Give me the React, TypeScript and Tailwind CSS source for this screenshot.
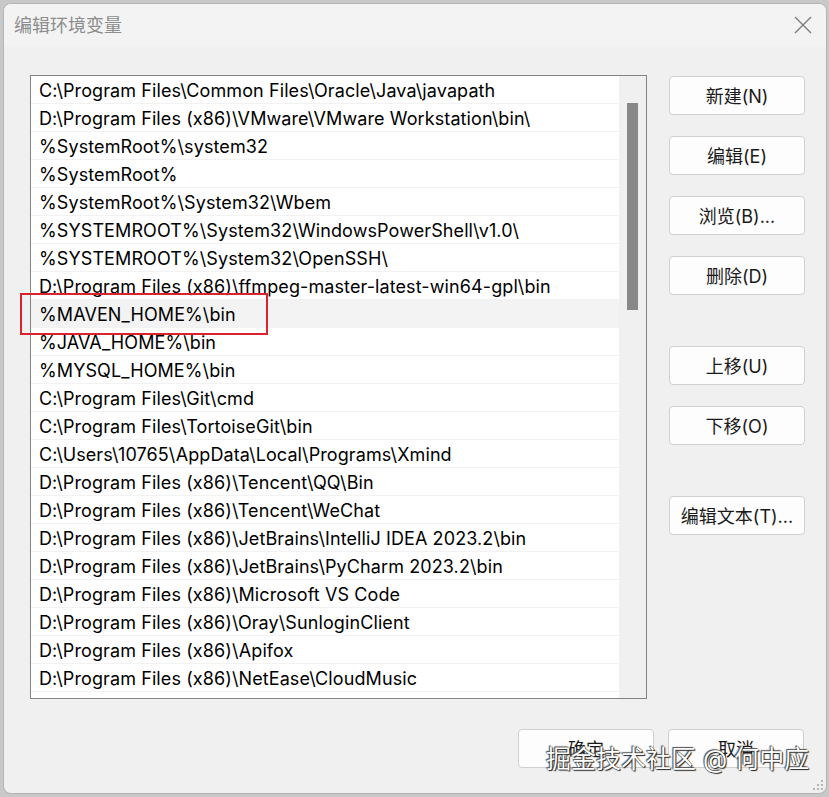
const paths = [
  "C:\\Program Files\\Common Files\\Oracle\\Java\\javapath",
  "D:\\Program Files (x86)\\VMware\\VMware Workstation\\bin\\",
  "%SystemRoot%\\system32",
  "%SystemRoot%",
  "%SystemRoot%\\System32\\Wbem",
  "%SYSTEMROOT%\\System32\\WindowsPowerShell\\v1.0\\",
  "%SYSTEMROOT%\\System32\\OpenSSH\\",
  "D:\\Program Files (x86)\\ffmpeg-master-latest-win64-gpl\\bin",
  "%MAVEN_HOME%\\bin",
  "%JAVA_HOME%\\bin",
  "%MYSQL_HOME%\\bin",
  "C:\\Program Files\\Git\\cmd",
  "C:\\Program Files\\TortoiseGit\\bin",
  "C:\\Users\\10765\\AppData\\Local\\Programs\\Xmind",
  "D:\\Program Files (x86)\\Tencent\\QQ\\Bin",
  "D:\\Program Files (x86)\\Tencent\\WeChat",
  "D:\\Program Files (x86)\\JetBrains\\IntelliJ IDEA 2023.2\\bin",
  "D:\\Program Files (x86)\\JetBrains\\PyCharm 2023.2\\bin",
  "D:\\Program Files (x86)\\Microsoft VS Code",
  "D:\\Program Files (x86)\\Oray\\SunloginClient",
  "D:\\Program Files (x86)\\Apifox",
  "D:\\Program Files (x86)\\NetEase\\CloudMusic",
];

const font = "font-['Inter','Noto_Sans_CJK_SC',sans-serif]";

function Btn({ label, className = "" }: { label: string; className?: string }) {
  return (
    <button
      className={`h-[39px] w-[136px] rounded-[4px] border border-[#d0d0d0] bg-[#fdfdfd] pt-[1px] text-[18px] text-[#1a1a1a] ${className}`}
    >
      {label}
    </button>
  );
}

export default function App() {
  return (
    <div className={`relative h-[797px] w-[829px] overflow-hidden bg-[#c8c8c8] ${font}`}>
      <div className="absolute left-[3px] top-[3px] flex h-[791px] w-[824px] flex-col overflow-hidden rounded-[8px] border border-[#b4b4b4] bg-[#f0f0f0]">
        {/* title bar */}
        <div className="flex h-[42px] shrink-0 items-center justify-between bg-[#f3f3f3] pl-[10px] pr-[14px]">
          <span className="text-[18px] text-[#8c8c8c]">编辑环境变量</span>
          <svg width="18" height="18" viewBox="0 0 18 18" className="text-[#7a7a7a]">
            <path d="M1 1 L17 17 M17 1 L1 17" stroke="currentColor" strokeWidth="1.3" fill="none" />
          </svg>
        </div>

        <div className="flex flex-1 pl-[26px] pt-[29px]">
          {/* list */}
          <div className="relative flex h-[624px] w-[617px] border border-[#838383] bg-white">
            <div className="flex-1 overflow-hidden">
              {paths.map((p, i) => (
                <div
                  key={i}
                  className={`flex h-[28px] items-center border-b border-[#f2f2f2] pl-[8px] pt-[1px] text-[18px] tracking-[0.1px] text-black ${
                    i === 8 ? "bg-[#f3f3f3]" : ""
                  }`}
                >
                  {p}
                </div>
              ))}
            </div>
            <div className="w-[27px] shrink-0 bg-[#f0f0f0] pl-[8px] pt-[27px]">
              <div className="h-[207px] w-[11px] bg-[#888888]" />
            </div>
            {/* highlight box */}
            <div className="pointer-events-none absolute left-[-11px] top-[217px] h-[42px] w-[248px] border-2 border-[#d9232e]" />
          </div>

          {/* side buttons */}
          <div className="ml-[22px] flex flex-col pt-[1px]">
            <Btn label="新建(N)" />
            <Btn label="编辑(E)" className="mt-[21px]" />
            <Btn label="浏览(B)..." className="mt-[21px]" />
            <Btn label="删除(D)" className="mt-[21px]" />
            <Btn label="上移(U)" className="mt-[51px]" />
            <Btn label="下移(O)" className="mt-[21px]" />
            <Btn label="编辑文本(T)..." className="mt-[51px]" />
          </div>
        </div>

        {/* footer */}
        <div className="flex h-[64px] shrink-0 justify-end gap-[14px] pr-[22px]">
          <Btn label="确定" />
          <Btn label="取消" />
        </div>

        {/* resize grip */}
        <svg width="12" height="12" viewBox="0 0 12 12" className="absolute bottom-[2px] right-[2px] text-[#b5b5b5]">
          <rect x="9" y="1" width="2" height="2" fill="currentColor" />
          <rect x="5" y="5" width="2" height="2" fill="currentColor" />
          <rect x="9" y="5" width="2" height="2" fill="currentColor" />
          <rect x="1" y="9" width="2" height="2" fill="currentColor" />
          <rect x="5" y="9" width="2" height="2" fill="currentColor" />
          <rect x="9" y="9" width="2" height="2" fill="currentColor" />
        </svg>
      </div>

      {/* watermark */}
      <div className="absolute left-[546px] top-[743px] text-[25px] leading-[32px] text-white [text-shadow:0_0_1px_#222,1px_1px_1px_#222,-1px_-1px_1px_#555]">
        掘金技术社区 @ 何中应
      </div>
    </div>
  );
}
